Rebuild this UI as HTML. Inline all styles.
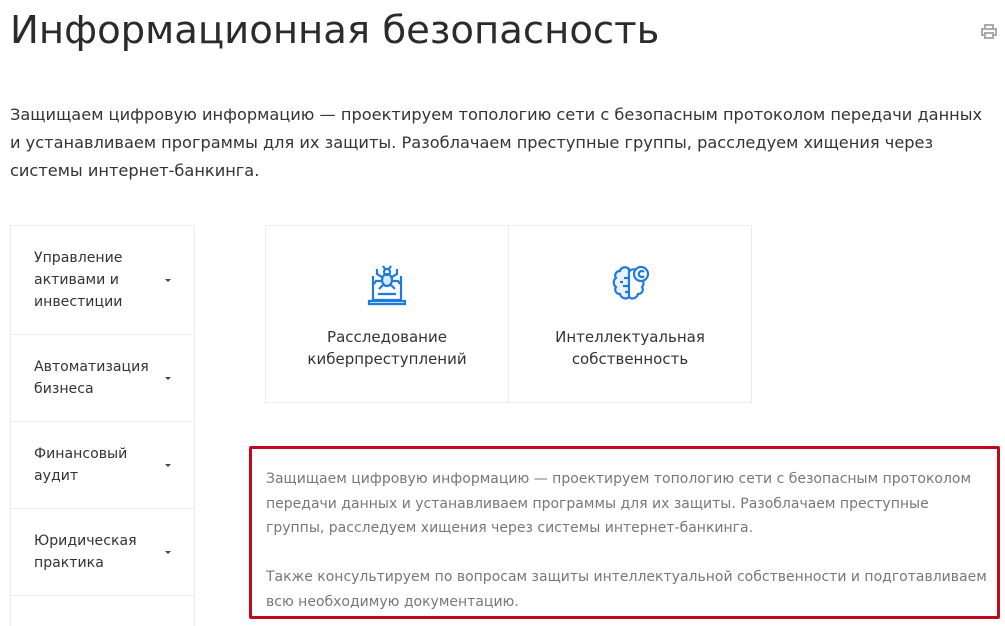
<!DOCTYPE html>
<html><head><meta charset="utf-8"><style>
body{margin:0;width:1005px;height:623px;overflow:hidden;background:#fff;font-family:"DejaVu Sans","Liberation Sans",sans-serif;color:#333}
.t{position:absolute;left:10px;top:3px;font-size:38.6px;color:#2b2b2b;white-space:nowrap;line-height:56px}
.p{position:absolute;left:10px;top:101px;font-size:16.2px;line-height:28px;white-space:nowrap;color:#333}
.side{position:absolute;left:10px;top:225px;width:183px;border:1px solid #ececec;border-bottom:none;height:400px}
.it{position:relative;border-bottom:1px solid #ececec;font-size:14.1px;line-height:22px;padding-left:23px;display:flex;align-items:center;color:#333}
.it:after{content:"";position:absolute;left:154px;top:50%;border:3px solid transparent;border-top:3px solid #444;margin-top:-1px}
.cards{position:absolute;left:265px;top:225px;width:485px;height:176px;border:1px solid #ececec;display:flex}
.c{flex:1;text-align:center;font-size:15px;line-height:22px;color:#333}
.c+.c{border-left:1px solid #ececec}
.box{position:absolute;left:249px;top:446px;width:745px;height:167px;border:3px solid #c0081e;border-radius:2px;font-size:14px;line-height:24.5px;color:#777;padding:0;white-space:nowrap}
</style></head><body>
<div class="t">Информационная безопасность</div>
<svg style="position:absolute;left:981px;top:24px" width="16" height="15" viewBox="0 0 16 15" fill="none" stroke="#aaa" stroke-width="2"><rect x="4" y="1" width="8" height="4"/><rect x="1" y="5" width="14" height="6"/><rect x="4" y="9" width="8" height="5" fill="#fff"/></svg>
<div class="p">Защищаем цифровую информацию — проектируем топологию сети с безопасным протоколом передачи данных<br>и устанавливаем программы для их защиты. Разоблачаем преступные группы, расследуем хищения через<br>системы интернет-банкинга.</div>
<div class="side">
<div class="it" style="height:108px">Управление<br>активами и<br>инвестиции</div>
<div class="it" style="height:86px">Автоматизация<br>бизнеса</div>
<div class="it" style="height:86px">Финансовый<br>аудит</div>
<div class="it" style="height:86px">Юридическая<br>практика</div>
</div>
<div class="cards">
<div class="c">
<svg style="margin-top:38px" width="40" height="42" viewBox="0 0 40 42" fill="none" stroke="#1f7ae0" stroke-width="2.2"><path d="M6 12v24h28V12"/><path d="M2 37h36v3H2z"/><path d="M11 30h18"/><ellipse cx="20" cy="16" rx="5" ry="6" fill="#dbe9fb"/><circle cx="20" cy="8" r="3"/><path d="M15 13l-5-3v-5M25 13l5-3v-5M15 17h-6l-2 3M25 17h6l2 3M16 21l-4 4M24 21l4 4M18 5l-2-3M22 5l2-3"/></svg>
<div style="margin-top:14px">Расследование<br>киберпреступлений</div></div>
<div class="c">
<svg style="margin-top:38px" width="42" height="42" viewBox="0 0 42 42" fill="none" stroke="#1f7ae0" stroke-width="2.2"><path d="M20 5c-3-3-8-2-9 2-4 0-6 4-4 7-3 2-3 7 0 9-2 3 0 7 4 7 1 4 6 6 9 3V5z" fill="#e8f1fc"/><path d="M20 8c2-3 5-3 7-2M20 33c3 3 8 1 9-3 4 0 6-4 4-7 2-2 2-5 0-7"/><path d="M20 14h-5M20 22h-6M11 18h3M20 28h-4"/><circle cx="32" cy="10" r="7" fill="#fff"/><path d="M35 8a3 3 0 1 0 0 4"/></svg>
<div style="margin-top:14px">Интеллектуальная<br>собственность</div></div>
</div>
<div class="box"><div style="position:absolute;left:14px;top:18px">Защищаем цифровую информацию — проектируем топологию сети с безопасным протоколом<br>передачи данных и устанавливаем программы для их защиты. Разоблачаем преступные<br>группы, расследуем хищения через системы интернет-банкинга.<br><br>Также консультируем по вопросам защиты интеллектуальной собственности и подготавливаем<br>всю необходимую документацию.</div></div>
</body></html>
